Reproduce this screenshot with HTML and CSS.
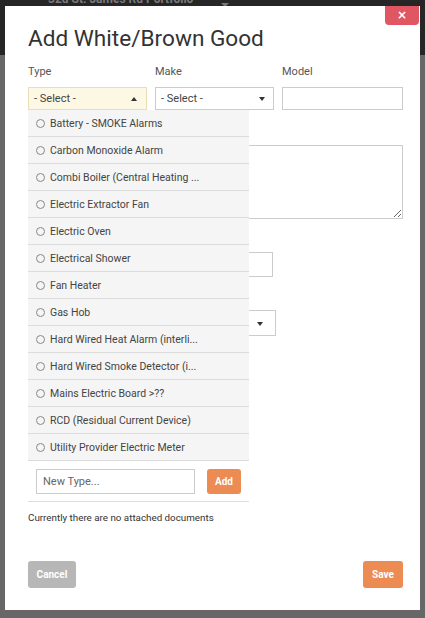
FILE: index.html
```html
<!DOCTYPE html>
<html>
<head>
<meta charset="utf-8">
<link rel="stylesheet" href="styles.css">
</head>
<body>
<div class="page">
  <div class="topbar"><span class="portfolio">32d St. James Rd Portfolio</span><span class="tb-caret"></span></div>
  <div class="page-body">
    <div class="side"></div>
  </div>
</div>

<div class="modal">
  <button class="close" type="button">&#215;</button>
  <h1 class="title">Add White/Brown Good</h1>

  <div class="row3">
    <div class="field type-field">
      <label class="lbl">Type</label>
      <div class="select select-open">- Select -<span class="tri tri-up"></span></div>
      <div class="dropdown">
        <ul class="opts">
          <li class="opt"><span class="radio"></span>Battery - SMOKE Alarms</li>
          <li class="opt"><span class="radio"></span>Carbon Monoxide Alarm</li>
          <li class="opt"><span class="radio"></span>Combi Boiler (Central Heating ...</li>
          <li class="opt"><span class="radio"></span>Electric Extractor Fan</li>
          <li class="opt"><span class="radio"></span>Electric Oven</li>
          <li class="opt"><span class="radio"></span>Electrical Shower</li>
          <li class="opt"><span class="radio"></span>Fan Heater</li>
          <li class="opt"><span class="radio"></span>Gas Hob</li>
          <li class="opt"><span class="radio"></span>Hard Wired Heat Alarm (interli...</li>
          <li class="opt"><span class="radio"></span>Hard Wired Smoke Detector (i...</li>
          <li class="opt"><span class="radio"></span>Mains Electric Board &gt;??</li>
          <li class="opt"><span class="radio"></span>RCD (Residual Current Device)</li>
          <li class="opt"><span class="radio"></span>Utility Provider Electric Meter</li>
        </ul>
        <div class="newtype">
          <div class="nt-input">New Type...</div>
          <button class="btn btn-orange btn-add" type="button">Add</button>
        </div>
      </div>
    </div>
    <div class="field">
      <label class="lbl">Make</label>
      <div class="select">- Select -<span class="tri tri-down"></span></div>
    </div>
    <div class="field">
      <label class="lbl">Model</label>
      <div class="input"></div>
    </div>
  </div>

  <div class="field gap">
    <span class="lbl-space"></span>
    <textarea class="textarea"></textarea>
  </div>
  <div class="field gap">
    <span class="lbl-space"></span>
    <div class="input w245"></div>
  </div>
  <div class="field gap">
    <span class="lbl-space"></span>
    <div class="select w248"><span class="tri tri-down"></span></div>
  </div>

  <p class="docs">Currently there are no attached documents</p>

  <div class="footer">
    <button class="btn btn-grey" type="button">Cancel</button>
    <button class="btn btn-orange" type="button">Save</button>
  </div>
</div>
</body>
</html>
```

FILE: styles.css
```css
* { box-sizing: border-box; }
html, body { margin: 0; padding: 0; }
body {
  width: 425px;
  height: 618px;
  overflow: hidden;
  background: #5b5b5b;
  font-family: Roboto, "Liberation Sans", sans-serif;
  position: relative;
}
.page { height: 618px; display: flex; flex-direction: column; }
.topbar {
  height: 55px;
  background: #262626;
  display: flex;
  align-items: flex-start;
  padding-left: 48px;
  gap: 28px;
}
.portfolio {
  margin-top: -8px;
  color: #7a7a7a;
  font-weight: bold;
  font-size: 12px;
  line-height: 14px;
}
.tb-caret {
  margin-top: 3px;
  width: 0; height: 0;
  border-left: 4px solid transparent;
  border-right: 4px solid transparent;
  border-top: 4px solid #777;
}
.page-body { flex: 1; background: #676767; }

.modal {
  position: absolute;
  top: 6px;
  left: 5px;
  width: 415px;
  height: 604px;
  background: #fff;
  padding: 19px 17px 0 23px;
  display: flex;
  flex-direction: column;
}
.close {
  position: absolute;
  top: 0;
  right: 1px;
  width: 34px;
  height: 19px;
  border: 0;
  border-radius: 0 0 4px 4px;
  background: #e05663;
  color: #fff;
  font-weight: bold;
  font-size: 12px;
  line-height: 19px;
  padding: 0;
  font-family: "DejaVu Sans", sans-serif;
}
.title {
  margin: 0;
  font-weight: 400;
  font-size: 22.6px;
  line-height: 28px;
  color: #333;
}
.row3 {
  margin-top: 12px;
  display: grid;
  grid-template-columns: 119px 119px 121px;
  column-gap: 8px;
}
.field { display: flex; flex-direction: column; position: relative; }
.gap { margin-top: 14px; }
.gap + .gap { margin-top: 12px; }
.lbl {
  font-size: 11px;
  line-height: 14px;
  color: #555;
  margin-bottom: 8px;
}
.lbl-space { display: block; height: 14px; margin-bottom: 7px; }
.select {
  height: 23px;
  border: 1px solid #ccc;
  background: #fff;
  font-size: 11px;
  line-height: 21px;
  color: #444;
  padding-left: 5px;
  position: relative;
}
.select-open { background: #fcf8e3; border-color: #e8dfb8; }
.tri {
  position: absolute;
  top: 9px;
  right: 9px;
  width: 0; height: 0;
  border-left: 3px solid transparent;
  border-right: 3px solid transparent;
}
.tri-up { border-bottom: 4px solid #333; }
.tri-down { border-top: 4px solid #333; right: 8px; }
.input {
  height: 23px;
  border: 1px solid #ccc;
  background: #fff;
}
.textarea {
  display: block;
  width: 100%;
  height: 74px;
  border: 1px solid #ccc;
  margin: 0;
  padding: 0;
  resize: vertical;
}
.w245 { width: 245px; height: 25px; }
.w248 { width: 248px; height: 26px; }
.w248 .tri { top: 11px; right: 12px; }

.dropdown {
  position: absolute;
  top: 45px;
  left: 0;
  width: 221px;
  background: #fff;
  z-index: 5;
  border-bottom: 1px solid #ddd;
}
.opts { list-style: none; margin: 0; padding: 0; background: #f5f5f5; }
.opt {
  height: 27px;
  border-bottom: 1px solid #dcdcdc;
  display: flex;
  align-items: center;
  padding: 1px 0 0 8px;
  font-size: 10.5px;
  color: #444;
  white-space: nowrap;
}
.radio {
  width: 9px;
  height: 9px;
  border: 1px solid #888;
  border-radius: 50%;
  margin-right: 5px;
  flex: none;
}
.newtype {
  display: flex;
  align-items: center;
  padding: 8px 8px 7px 8px;
  gap: 12px;
}
.nt-input {
  width: 159px;
  height: 25px;
  border: 1px solid #ccc;
  font-size: 11px;
  line-height: 23px;
  color: #666;
  padding-left: 6px;
}
.btn {
  border: 0;
  border-radius: 3px;
  color: #fff;
  font-family: Roboto, "Liberation Sans", sans-serif;
  font-weight: bold;
  font-size: 10px;
  padding: 0;
  height: 27px;
}
.btn-orange { background: #ec8b52; }
.btn-grey { background: #b7b7b7; width: 48px; }
.btn-add { width: 34px; height: 25px; }
.footer .btn-orange { width: 40px; }

.docs {
  margin: 176px 0 0 0;
  font-size: 9.8px;
  line-height: 12px;
  color: #333;
}
.footer {
  margin-top: auto;
  margin-bottom: 22px;
  display: flex;
  justify-content: space-between;
}
```
